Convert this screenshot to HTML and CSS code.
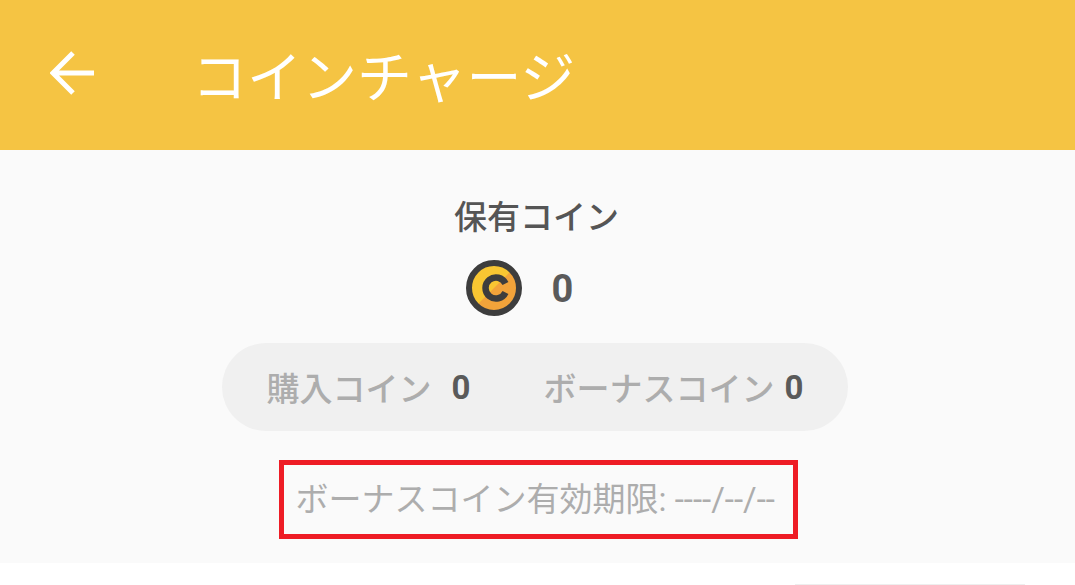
FILE: index.html
```html
<!DOCTYPE html>
<html lang="ja">
<head>
    <meta charset="UTF-8">
    <meta name="viewport" content="width=device-width, initial-scale=1.0">
    <title>コインチャージ</title>
    <link rel="stylesheet" href="styles.css">
</head>
<body>
    <header class="app-bar">
        <svg class="back-icon" viewBox="0 0 44 44" width="44" height="44" aria-hidden="true">
            <path d="M44 22H3M23 2L3 22l20 20" fill="none" stroke="#fff" stroke-width="5"/>
        </svg>
        <h1 class="title">コインチャージ</h1>
    </header>
    <main class="summary">
        <div class="label">保有コイン</div>
        <div class="total">
            <svg class="coin" viewBox="0 0 56 56" width="56" height="56" aria-hidden="true">
                <circle cx="28" cy="28" r="25" fill="#f2a33a"/>
                <path d="M10 46A25.5 25.5 0 0 1 46 10Z" fill="#f8c632"/>
                <circle cx="28" cy="28" r="25" fill="none" stroke="#3d3d3d" stroke-width="6"/>
                <path d="M39.5 23.5A10.5 10.5 0 1 0 39.5 32.5" fill="none" stroke="#3d3d3d" stroke-width="6.5"/>
            </svg>
            <span class="total-value">0</span>
        </div>
        <div class="breakdown">
            <span class="breakdown-label">購入コイン</span>
            <span class="breakdown-value first">0</span>
            <span class="breakdown-label second">ボーナスコイン</span>
            <span class="breakdown-value">0</span>
        </div>
        <div class="expiry">ボーナスコイン有効期限: ----/--/--</div>
    </main>
    <div class="next-card"></div>
</body>
</html>
```

FILE: styles.css
```css
body {
    margin: 0;
    height: 585px;
    overflow: hidden;
    background: #fff;
    font-family: Roboto, "Noto Sans CJK JP", sans-serif;
}

.app-bar {
    display: flex;
    align-items: center;
    height: 150px;
    padding-left: 50px;
    box-sizing: border-box;
    background: #f5c443;
}

.back-icon {
    margin-bottom: 4px;
}

.title {
    margin: 0 0 4px 98px;
    font-size: 55px;
    font-weight: 400;
    color: #fff;
}

.summary {
    display: flex;
    flex-direction: column;
    align-items: center;
    height: 413px;
    box-sizing: border-box;
    padding: 44px 6px 0 0;
    background: #fafafa;
}

.label {
    height: 48px;
    line-height: 48px;
    margin-left: 4px;
    font-size: 33px;
    font-weight: 500;
    color: #555;
}

.total {
    display: flex;
    align-items: center;
    height: 56px;
    margin-top: 18px;
    margin-right: 30px;
}

.total-value {
    margin: 2px 0 0 30px;
    font-size: 38px;
    font-weight: 700;
    color: #5a5a5a;
}

.breakdown {
    display: flex;
    align-items: center;
    box-sizing: border-box;
    width: 626px;
    height: 88px;
    margin-top: 27px;
    padding-left: 45px;
    border-radius: 44px;
    background: #f0f0f0;
    font-size: 33px;
    font-weight: 500;
}

.breakdown-label {
    color: #adadad;
}

.breakdown-value {
    margin-left: 10px;
    font-weight: 700;
    color: #5a5a5a;
}

.breakdown-value.first {
    margin-left: 20px;
}

.breakdown-label.second {
    margin-left: 73px;
}

.expiry {
    box-sizing: border-box;
    width: 519px;
    height: 79px;
    margin: 29px 0 0 7px;
    border: 5px solid #ee1c25;
    line-height: 69px;
    padding-left: 12px;
    font-size: 33px;
    color: #adadad;
    white-space: nowrap;
}

.next-card {
    height: 1px;
    width: 230px;
    margin: 21px 0 0 795px;
    background: #eee;
}
```
